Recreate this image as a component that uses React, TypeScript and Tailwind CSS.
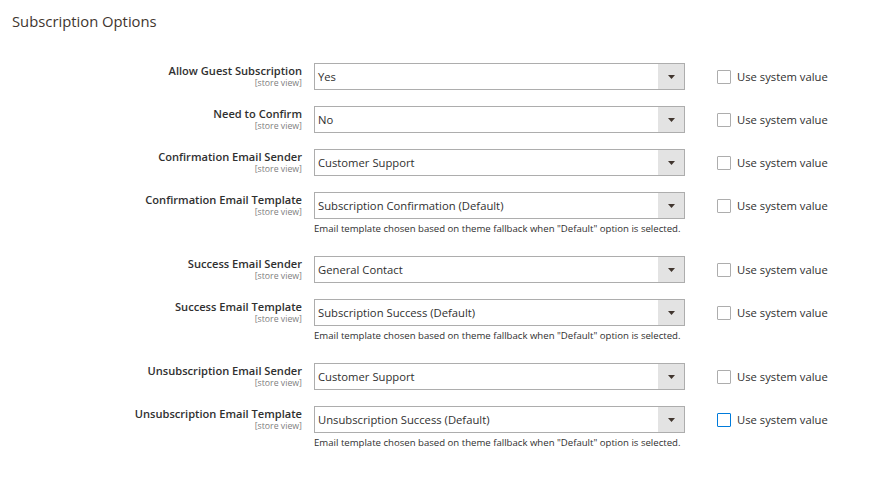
import React from "react";

type Row = { label: string; value: string; note?: boolean; focus?: boolean };

const rows: Row[] = [
  { label: "Allow Guest Subscription", value: "Yes" },
  { label: "Need to Confirm", value: "No" },
  { label: "Confirmation Email Sender", value: "Customer Support" },
  { label: "Confirmation Email Template", value: "Subscription Confirmation (Default)", note: true },
  { label: "Success Email Sender", value: "General Contact" },
  { label: "Success Email Template", value: "Subscription Success (Default)", note: true },
  { label: "Unsubscription Email Sender", value: "Customer Support" },
  { label: "Unsubscription Email Template", value: "Unsubscription Success (Default)", note: true, focus: true },
];

export default function App() {
  return (
    <div
      className="w-[872px] h-[482px] bg-white text-[#303030] overflow-hidden"
      style={{ fontFamily: '"Open Sans", "Liberation Sans", sans-serif' }}
    >
      <div className="pl-[12px] pt-[11px] text-[14.8px] leading-[20px] text-[#41362f]">Subscription Options</div>
      <div className="pt-[32px] flex flex-col gap-[16px]">
        {rows.map((r) => (
          <div key={r.label} className="flex">
            <div className="w-[302px] text-right pt-[1px]">
              <div className="text-[11.1px] leading-[14px] font-semibold text-[#303030]">{r.label}</div>
              <div className="text-[8.75px] leading-[10px] text-[#808080]">[store view]</div>
            </div>
            <div className="ml-[12px] w-[371px]">
              <div className="h-[27px] border border-[#adadad] flex items-stretch bg-white">
                <div className="flex-1 pl-[3px] text-[11.25px] leading-[25px] text-[#303030]">{r.value}</div>
                <div className="w-[26px] bg-[#e3e3e3] flex items-center justify-center">
                  <svg width="7" height="4" viewBox="0 0 7 4">
                    <path d="M0 0 H7 L3.5 4 Z" fill="#41362f" />
                  </svg>
                </div>
              </div>
              {r.note && (
                <div className="mt-[3px] mb-[4px] text-[9.6px] leading-[14px] text-[#303030] whitespace-nowrap">
                  Email template chosen based on theme fallback when "Default" option is selected.
                </div>
              )}
            </div>
            <div className="ml-[32px] h-[27px] flex items-center">
              <div
                className={
                  r.focus
                    ? "w-[14px] h-[14px] border border-[#007bdb] rounded-[1px] bg-white"
                    : "w-[14px] h-[14px] border border-[#adadad] rounded-[1px] bg-white"
                }
              />
              <span className="ml-[6px] text-[11.25px] leading-[14px] text-[#303030]">Use system value</span>
            </div>
          </div>
        ))}
      </div>
    </div>
  );
}
